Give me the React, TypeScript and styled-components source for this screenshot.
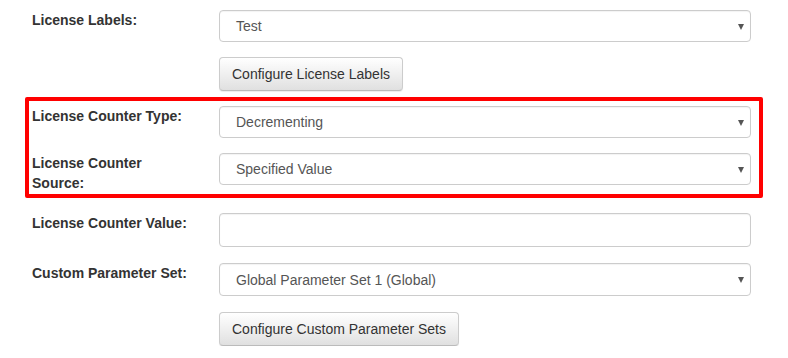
import styled, { createGlobalStyle } from 'styled-components';

const GlobalStyle = createGlobalStyle`
  body {
    margin: 0;
    background: #fff;
    font-family: "Liberation Sans", Arial, sans-serif;
    font-size: 14px;
    line-height: 20px;
    color: #333;
  }
`;

const Form = styled.form`
  width: 719px;
  padding: 10px 0 0 32px;
  display: flex;
  flex-direction: column;
`;

const Row = styled.div<{ $gap?: number }>`
  display: grid;
  grid-template-columns: 155px 532px;
  column-gap: 32px;
  align-items: start;
  margin-top: ${({ $gap }) => $gap ?? 0}px;
`;

const Label = styled.label`
  font-weight: bold;
  color: #333;
  line-height: 20px;
`;

const Highlight = styled.div`
  margin: 6px -12px 0 -7px;
  padding: 5px 8px 1px 3px;
  border: 4px solid #ff0000;
  border-radius: 2px;
`;

const Select = styled.div<{ $height?: number }>`
  box-sizing: border-box;
  height: ${({ $height }) => $height ?? 32}px;
  display: flex;
  align-items: center;
  justify-content: space-between;
  padding: 0 6px 0 16px;
  border: 1px solid #ccc;
  border-radius: 4px;
  background: #fff;
  box-shadow: inset 0 1px 1px rgba(0, 0, 0, 0.05);
  color: #555;
`;

const Caret = styled.span`
  width: 0;
  height: 0;
  border-left: 3px solid transparent;
  border-right: 3px solid transparent;
  border-top: 6px solid #555;
  margin-top: 1px;
`;

const Input = styled.div`
  box-sizing: border-box;
  height: 34px;
  border: 1px solid #ccc;
  border-radius: 4px;
  background: #fff;
  box-shadow: inset 0 1px 1px rgba(0, 0, 0, 0.05);
`;

const Button = styled.button`
  justify-self: start;
  box-sizing: border-box;
  height: 34px;
  padding: 0 12px;
  font-family: inherit;
  font-size: 14px;
  color: #333;
  border: 1px solid #ccc;
  border-bottom-color: #bbb;
  border-radius: 4px;
  background: linear-gradient(to bottom, #ffffff 0%, #e0e0e0 100%);
  box-shadow: inset 0 1px 0 rgba(255, 255, 255, 0.15), 0 1px 1px rgba(0, 0, 0, 0.075);
`;

const Dropdown = ({ value, height }: { value: string; height?: number }) => (
  <Select $height={height}>
    <span>{value}</span>
    <Caret />
  </Select>
);

export default function App() {
  return (
    <>
      <GlobalStyle />
      <Form>
        <Row>
          <Label>License Labels:</Label>
          <Dropdown value="Test" />
        </Row>
        <Row $gap={15}>
          <span />
          <Button type="button">Configure License Labels</Button>
        </Row>
        <Highlight>
          <Row>
            <Label>License Counter Type:</Label>
            <Dropdown value="Decrementing" />
          </Row>
          <Row $gap={15}>
            <Label>License Counter Source:</Label>
            <Dropdown value="Specified Value" />
          </Row>
        </Highlight>
        <Row $gap={15}>
          <Label>License Counter Value:</Label>
          <Input />
        </Row>
        <Row $gap={16}>
          <Label>Custom Parameter Set:</Label>
          <Dropdown value="Global Parameter Set 1 (Global)" height={33} />
        </Row>
        <Row $gap={16}>
          <span />
          <Button type="button">Configure Custom Parameter Sets</Button>
        </Row>
      </Form>
    </>
  );
}
